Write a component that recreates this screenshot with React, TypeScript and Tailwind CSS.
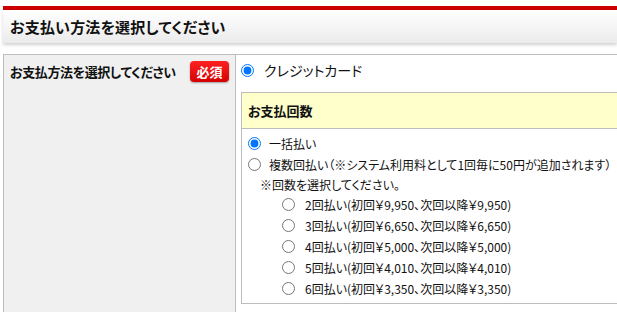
import React from 'react';

const font = "[font-family:'Noto_Sans_CJK_JP','Liberation_Sans',sans-serif] [font-feature-settings:'palt']";

const installments = [
  { n: 2, first: '9,950', next: '9,950' },
  { n: 3, first: '6,650', next: '6,650' },
  { n: 4, first: '5,000', next: '5,000' },
  { n: 5, first: '4,010', next: '4,010' },
  { n: 6, first: '3,350', next: '3,350' },
];

const Radio: React.FC<{ name: string; checked?: boolean }> = ({ name, checked }) => (
  <input type="radio" name={name} defaultChecked={checked} className="m-0 w-[13px] h-[13px] shrink-0" />
);

export default function App() {
  return (
    <div className={`w-[617px] h-[312px] overflow-hidden bg-white text-[#111] pt-[6px] pl-[3px] ${font}`}>
      <div className="h-[4px] bg-[#cc0000]" />
      <div className="h-[33px] flex items-center pl-[7px] bg-gradient-to-b from-white to-[#ebebeb] shadow-[0_2px_3px_rgba(0,0,0,0.18)]">
        <h1 className="text-[15px] font-bold leading-none tracking-[0.2px]">お支払い方法を選択してください</h1>
      </div>

      <div className="mt-[11px] w-[700px] flex border-t border-l border-[#bdbdbd] h-[300px]">
        <div className="w-[232px] shrink-0 bg-[#f0f0f0] border-r border-[#bdbdbd] pt-[6px]">
          <div className="h-[21px] flex items-center">
            <span className="pl-[6px] text-[13px] font-bold leading-none tracking-[-0.4px]">お支払方法を選択してください</span>
            <span className="ml-auto mr-[6px] w-[39px] h-[21px] rounded-[4px] bg-gradient-to-b from-[#ff2020] to-[#d40000] shadow-[0_1px_2px_rgba(0,0,0,0.35)] text-white text-[13px] font-bold flex items-center justify-center leading-none">必須</span>
          </div>
        </div>

        <div className="flex-1 pl-[5px]">
          <div className="h-[30px] flex items-center gap-[10px]">
            <Radio name="method" checked />
            <span className="text-[14px] leading-none">クレジットカード</span>
          </div>

          <div className="mt-[7px] border border-[#bdbdbd]">
            <div className="h-[36px] bg-[#ffffcc] border-b border-[#bdbdbd] flex items-center pl-[6px]">
              <span className="text-[13px] font-bold leading-none">お支払回数</span>
            </div>
            <div className="pt-[4px] pb-[4px] text-[12px] leading-none">
              <label className="h-[21px] flex items-center pl-[6px] gap-[8px]">
                <Radio name="count" checked />
                <span>一括払い</span>
              </label>
              <label className="h-[21px] flex items-center pl-[6px] gap-[8px]">
                <Radio name="count" />
                <span>複数回払い（※システム利用料として1回毎に50円が追加されます）</span>
              </label>
              <div className="h-[19px] flex items-center pl-[18px]">※回数を選択してください。</div>
              {installments.map((i) => (
                <label key={i.n} className="h-[21px] flex items-center pl-[40px] gap-[10px] text-[12px]">
                  <Radio name="sub" />
                  <span>{i.n}回払い(初回￥{i.first}、次回以降￥{i.next})</span>
                </label>
              ))}
            </div>
          </div>
        </div>
      </div>
    </div>
  );
}
